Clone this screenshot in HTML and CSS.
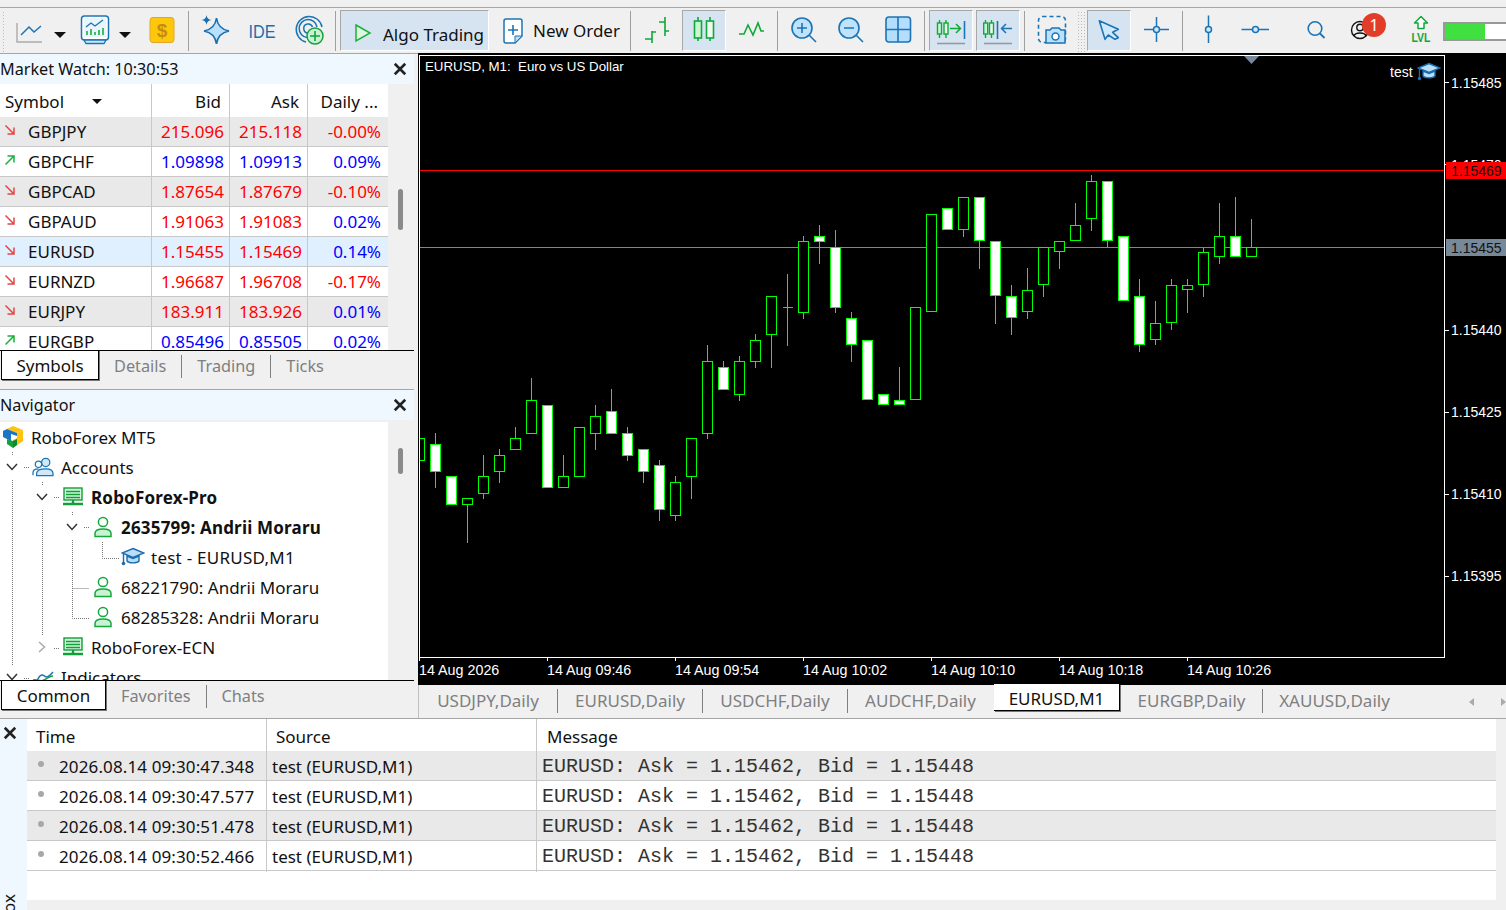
FILE: index.html
```html
<!DOCTYPE html>
<html lang="en">
<head>
    <meta charset="UTF-8">
    <title>MetaTrader 5</title>
    <link rel="stylesheet" href="styles.css">
</head>
<body>
    <svg class="sprites" width="0" height="0">
        <symbol id="down" viewBox="0 0 12 12"><path d="M1.5 1.5 10 10M10 3.5V10H3.5" fill="none" stroke="#e04848" stroke-width="1.5"/></symbol>
        <symbol id="up" viewBox="0 0 12 12"><path d="M1.5 10.5 10 2M3.5 2H10V8.5" fill="none" stroke="#1fae3c" stroke-width="1.5"/></symbol>
        <symbol id="cross" viewBox="0 0 12 12"><path d="M1.5 1.5 10.5 10.5M10.5 1.5 1.5 10.5" fill="none" stroke="#222" stroke-width="2.2"/></symbol>
        <symbol id="server" viewBox="0 0 22 20"><rect x="2" y="1" width="18" height="12" fill="#d3f5dc" stroke="#10a038" stroke-width="1.4"/><path d="M4 4.5h14M4 7.5h14M4 10.5h14" stroke="#10a038" stroke-width="1.4"/><path d="M11 13v3M1 17h20" stroke="#10a038" stroke-width="2.4"/></symbol>
        <symbol id="user" viewBox="0 0 20 22"><circle cx="10" cy="6" r="4.6" fill="#fff" stroke="#15a83c" stroke-width="1.5"/><path d="M2 20.5v-3c0-3 3-4.500 8-4.500s8 1.500 8 4.500v3z" fill="#c9f3d3" stroke="#15a83c" stroke-width="1.5"/></symbol>
        <symbol id="cap" viewBox="0 0 24 20"><path d="M12 1.500 23 6 12 10.500 1 6z" fill="#b8dffa" stroke="#1b6cab" stroke-width="1.4"/><path d="M6 9v5c2 2.500 10 2.500 12 0V9l-6 2.500z" fill="#b8dffa" stroke="#1b6cab" stroke-width="1.4"/><path d="M2.500 7v8" stroke="#1b6cab" stroke-width="1.4"/><circle cx="2.500" cy="16.500" r="1.800" fill="#1b6cab"/></symbol>
    </svg>

    <div class="top-strip"></div>

    <!-- main toolbar -->
    <div class="toolbar">
        <div class="grip"></div>
        <div class="tool w34"><svg class="ico" viewBox="0 0 30 30"><path d="M3 8V27H28" fill="none" stroke="#aaa" stroke-width="1.4"/><path d="M7 20 15 12 20 17 27 11" fill="none" stroke="#1c74b4" stroke-width="1.500"/></svg></div>
        <div class="tool w27"><div class="caret"></div></div>
        <div class="tool w43"><svg class="ico" viewBox="0 0 30 30"><rect x="1.500" y="1" width="27" height="24" rx="3" fill="#fff" stroke="#1c74b4" stroke-width="1.500"/><path d="M4 22 h22 v-19 h-22z" fill="#e9f4fc"/><path d="M6 12 11 8 15 11 23 5" fill="none" stroke="#1c74b4" stroke-width="1.300"/><path d="M7 20v-4M11 20v-6M15 20v-3M19 20v-5M23 20v-7" stroke="#1fae3c" stroke-width="1.600"/><path d="M4 25h22l-2 3.500H6z" fill="#cfe8fa" stroke="#1c74b4" stroke-width="1.300"/></svg></div>
        <div class="tool w19 caret-slot"><div class="caret"></div></div>
        <div class="tool w53"><svg class="ico" viewBox="0 0 30 30"><rect x="3" y="2.500" width="24" height="25" rx="3" fill="#fdc80c" stroke="#e2a52a"/><text class="dollar" x="15" y="22" text-anchor="middle">$</text></svg></div>
        <div class="sep"></div>
        <div class="tool w51"><svg class="ico" viewBox="0 0 30 30"><path d="M16.500 3Q18 14 29 16 18 18 16.500 29 15 18 4 16 15 14 16.500 3Z" fill="#b9e1fd" stroke="#1c6fae" stroke-width="1.600"/><path d="M6.500 0Q7 4.500 11.500 5 7 5.500 6.500 10 6 5.500 1.500 5 6 4.500 6.500 0Z" fill="#1c6fae"/></svg></div>
        <div class="tool w43"><svg class="ico" viewBox="0 0 30 30"><text class="ide" x="1.500" y="23" textLength="27" lengthAdjust="spacingAndGlyphs">IDE</text></svg></div>
        <div class="tool w52"><svg class="ico" viewBox="0 0 30 30"><g fill="none" stroke="#1c74b4" stroke-width="1.500"><path d="M12 27A13 13 0 1 1 28 12"/><path d="M13 22.500A9 9 0 1 1 23 12"/><path d="M14 18A4.500 4.500 0 1 1 18.500 12"/></g><circle cx="21" cy="21" r="8" fill="#c8f2d2" stroke="#15a03c" stroke-width="1.500"/><path d="M21 16v10M16 21h10" stroke="#15a03c" stroke-width="1.600"/></svg></div>
        <div class="sep"></div>
        <div class="tool algo on">
            <svg class="play" viewBox="0 0 18 20"><path d="M2 2 16 10 2 18z" fill="#dcf8e2" stroke="#1fae3c" stroke-width="1.500"/></svg>
            <span>Algo Trading</span>
        </div>
        <div class="tool order">
            <svg class="doc" viewBox="0 0 20 26"><path d="M3 1H17a2 2 0 0 1 2 2V18L12 25H3a2 2 0 0 1-2-2V3a2 2 0 0 1 2-2z" fill="#fff" stroke="#1c74b4" stroke-width="1.500"/><path d="M12 25V18H19z" fill="#b9e1fd" stroke="#1c74b4"/><path d="M10 7V17M5 12H15" stroke="#1c74b4" stroke-width="1.600"/></svg>
            <span>New Order</span>
        </div>
        <div class="sep"></div>
        <div class="tool w51"><svg class="ico" viewBox="0 0 30 30"><path d="M10 16V28M3 24H10M10 17H14M23 2V21M17 7H23M23 16H27" fill="none" stroke="#10a838" stroke-width="1.600"/></svg></div>
        <div class="tool w44 on"><svg class="ico" viewBox="0 0 30 30"><path d="M9 2V26M21 2V26" stroke="#10a838" stroke-width="1.600"/><rect x="5.500" y="6" width="7" height="17" fill="#c9f7d4" stroke="#10a838" stroke-width="1.600"/><rect x="17.500" y="6" width="7" height="17" fill="#eefaf0" stroke="#10a838" stroke-width="1.600"/></svg></div>
        <div class="tool w51"><svg class="ico" viewBox="0 0 30 30"><path d="M2 19H7L11 10 16 20 21 8 24 16H27" fill="none" stroke="#10a838" stroke-width="1.600"/></svg></div>
        <div class="sep"></div>
        <div class="tool w49"><svg class="ico" viewBox="0 0 30 30"><circle cx="14" cy="13" r="10" fill="#bfe3fd" stroke="#1c74b4" stroke-width="1.600"/><path d="M21 20 28 27M14 8V18M9 13H19" stroke="#1c74b4" stroke-width="1.600"/></svg></div>
        <div class="tool w47"><svg class="ico" viewBox="0 0 30 30"><circle cx="13" cy="13" r="10" fill="#bfe3fd" stroke="#1c74b4" stroke-width="1.600"/><path d="M20 20 27 27M8 13H18" stroke="#1c74b4" stroke-width="1.600"/></svg></div>
        <div class="tool w50"><svg class="ico" viewBox="0 0 30 30"><rect x="2" y="2" width="24.500" height="25" rx="3" fill="#b3deff" stroke="#1c74b4" stroke-width="1.600"/><path d="M14 2V27M2 14.500H26" stroke="#1c74b4" stroke-width="1.600"/></svg></div>
        <div class="sep"></div>
        <div class="tool w44 on ml4"><svg class="ico" viewBox="0 0 30 30"><path d="M3.500 5V23M10 5V23" stroke="#10a838" stroke-width="1.400"/><rect x="1.500" y="8" width="4" height="11" fill="#c9f7d4" stroke="#10a838" stroke-width="1.400"/><rect x="8" y="8" width="4" height="11" fill="#eefaf0" stroke="#10a838" stroke-width="1.400"/><path d="M14 13.500H24M20 9 24.500 13.500 20 18" fill="none" stroke="#10a838" stroke-width="1.500"/><path d="M28.500 6V24" stroke="#1c74b4" stroke-width="1.600"/><path d="M1 28.500H29" stroke="#999" stroke-width="1.600"/></svg></div>
        <div class="tool w44 on ml3"><svg class="ico" viewBox="0 0 30 30"><path d="M2.500 5V23M8.500 5V23" stroke="#10a838" stroke-width="1.400"/><rect x="0.700" y="8" width="4" height="11" fill="#c9f7d4" stroke="#10a838" stroke-width="1.400"/><rect x="6.500" y="8" width="4" height="11" fill="#eefaf0" stroke="#10a838" stroke-width="1.400"/><path d="M14.500 6V24" stroke="#1c74b4" stroke-width="1.600"/><path d="M29 13.500H18.500M23 9 18.500 13.500 23 18" fill="none" stroke="#1c74b4" stroke-width="1.500"/><path d="M1 28.500H29" stroke="#999" stroke-width="1.600"/></svg></div>
        <div class="sep ml4"></div>
        <div class="tool w53"><svg class="ico" viewBox="0 0 30 30"><rect x="1.500" y="1.500" width="27" height="26" rx="4" fill="none" stroke="#1c74b4" stroke-width="1.600" stroke-dasharray="4 3"/><path d="M9 15H13L15 13H22L24 15H28V28H9z" fill="#b9e1fd" stroke="#1c74b4" stroke-width="1.500"/><circle cx="18.500" cy="21.500" r="3.500" fill="#fff" stroke="#1c74b4" stroke-width="1.500"/></svg></div>
        <div class="grip grip-mid"></div>
        <div class="tool w44 on"><svg class="ico" viewBox="0 0 30 30"><path d="M5.300 5.700 24.300 14.300 18.700 17.300 24.300 22.700 21 24.300 14.300 20 11 24.300z" fill="#cfe8fa" stroke="#1c74b4" stroke-width="1.600" stroke-linejoin="round"/></svg></div>
        <div class="tool w51"><svg class="ico" viewBox="0 0 30 30"><path d="M2 14.500H11M18 14.500H27M14.500 2V11M14.500 18V27" stroke="#1c74b4" stroke-width="1.500"/><circle cx="14.500" cy="14.500" r="3" fill="#cfe8fa" stroke="#1c74b4" stroke-width="1.500"/></svg></div>
        <div class="sep"></div>
        <div class="tool w52"><svg class="ico" viewBox="0 0 30 30"><path d="M14.500 0.500V28" stroke="#1c74b4" stroke-width="1.500"/><circle cx="14.500" cy="14.500" r="3" fill="#cfe8fa" stroke="#1c74b4" stroke-width="1.500"/></svg></div>
        <div class="tool w42"><svg class="ico" viewBox="0 0 30 30"><path d="M0.500 14.500H28" stroke="#1c74b4" stroke-width="1.500"/><circle cx="14.500" cy="14.500" r="3" fill="#cfe8fa" stroke="#1c74b4" stroke-width="1.500"/></svg></div>
        <div class="tool w46 ml16"><svg class="ico" viewBox="0 0 30 30"><circle cx="14" cy="13.500" r="6.800" fill="none" stroke="#1c74b4" stroke-width="1.600"/><path d="M19 18.500 23.500 23" stroke="#1c74b4" stroke-width="1.800"/></svg></div>
        <div class="tool w44 profile">
            <svg class="ico" viewBox="0 0 30 30"><circle cx="14" cy="15" r="8.500" fill="none" stroke="#111" stroke-width="1.400"/><circle cx="14" cy="12.500" r="3.200" fill="none" stroke="#111" stroke-width="1.400"/><path d="M8 21C9 17 19 17 20 21" fill="none" stroke="#111" stroke-width="1.400"/></svg>
            <span class="badge">1</span>
        </div>
        <div class="tool w45 ml15"><svg class="ico" viewBox="0 0 30 30"><path d="M15 1.500 21.500 8H18V13.500H12V8H8.500z" fill="#fff" stroke="#10a838" stroke-width="1.500" stroke-linejoin="round"/><text class="lvl" x="5.500" y="26.500" textLength="19" lengthAdjust="spacingAndGlyphs">LVL</text></svg></div>
        <div class="meter"><div class="meter-fill"></div></div>
    </div>

    <div class="workspace">
        <!-- left docked panels -->
        <div class="side">
            <div class="panel-head"><span>Market Watch: 10:30:53</span><svg class="close" viewBox="0 0 12 12"><use href="#cross"/></svg></div>
            <div class="mw-body">
                <div class="mw-table">
                    <div class="mw-row mw-head">
                        <div class="mw-sym">Symbol<i class="sort"></i></div>
                        <div class="mw-num">Bid</div>
                        <div class="mw-num">Ask</div>
                        <div class="mw-num">Daily ...</div>
                    </div>
                    <div class="mw-row grey"><div class="mw-sym"><svg class="arr"><use href="#down"/></svg>GBPJPY</div><div class="mw-num red">215.096</div><div class="mw-num red">215.118</div><div class="mw-num red">-0.00%</div></div>
                    <div class="mw-row"><div class="mw-sym"><svg class="arr"><use href="#up"/></svg>GBPCHF</div><div class="mw-num blue">1.09898</div><div class="mw-num blue">1.09913</div><div class="mw-num blue">0.09%</div></div>
                    <div class="mw-row grey"><div class="mw-sym"><svg class="arr"><use href="#down"/></svg>GBPCAD</div><div class="mw-num red">1.87654</div><div class="mw-num red">1.87679</div><div class="mw-num red">-0.10%</div></div>
                    <div class="mw-row"><div class="mw-sym"><svg class="arr"><use href="#down"/></svg>GBPAUD</div><div class="mw-num red">1.91063</div><div class="mw-num red">1.91083</div><div class="mw-num blue">0.02%</div></div>
                    <div class="mw-row sel"><div class="mw-sym"><svg class="arr"><use href="#down"/></svg>EURUSD</div><div class="mw-num red">1.15455</div><div class="mw-num red">1.15469</div><div class="mw-num blue">0.14%</div></div>
                    <div class="mw-row"><div class="mw-sym"><svg class="arr"><use href="#down"/></svg>EURNZD</div><div class="mw-num red">1.96687</div><div class="mw-num red">1.96708</div><div class="mw-num red">-0.17%</div></div>
                    <div class="mw-row grey"><div class="mw-sym"><svg class="arr"><use href="#down"/></svg>EURJPY</div><div class="mw-num red">183.911</div><div class="mw-num red">183.926</div><div class="mw-num blue">0.01%</div></div>
                    <div class="mw-row"><div class="mw-sym"><svg class="arr"><use href="#up"/></svg>EURGBP</div><div class="mw-num blue">0.85496</div><div class="mw-num blue">0.85505</div><div class="mw-num blue">0.02%</div></div>
                </div>
                <div class="scroll"><div class="thumb thumb-mw"></div></div>
            </div>
            <div class="side-tabs tabs-mw">
                <div class="side-tab active w98">Symbols</div>
                <div class="side-tab">Details</div>
                <div class="side-tab">Trading</div>
                <div class="side-tab last">Ticks</div>
            </div>

            <div class="panel-head nav-head"><span>Navigator</span><svg class="close" viewBox="0 0 12 12"><use href="#cross"/></svg></div>
            <div class="nav-body">
                <div class="tree">
                    <svg class="tree-lines" viewBox="0 0 388 258">
                        <path d="M12.500 30V33M12.500 58V243M24 45.500H29M42.500 60V63M42.500 88V213M54 75.500H59M54 226.500H59M72.500 90V93M72.500 118V196.500H89M72.500 166.500H89M84 105.500H89M102.500 120V136.500H120M24 256.500H29"/>
                    </svg>
                    <div class="tree-row root"><svg class="logo" viewBox="0 0 22 24"><path d="M5 4 11 1 21 5 15 8z" fill="#ffc20e"/><path d="M1 6 5 4 15 8V11L9 9V16L1 12z" fill="#1c74c4"/><path d="M15 8 21 5V16L11 23V15L15 13z" fill="#ffc20e"/><path d="M5 14 11 16V23L5 19z" fill="#14a03c"/><path d="M11 16 15 14V20L11 23z" fill="#0d8a30"/></svg>RoboForex MT5</div>
                    <div class="tree-row"><i class="chev"><svg viewBox="0 0 12 8"><path d="M1 1 6 6.500 11 1" fill="none" stroke="#333" stroke-width="1.500"/></svg></i><i class="node"><svg class="i22" viewBox="0 0 24 22"><circle cx="15" cy="6" r="4.500" fill="#cfe8fa" stroke="#1c74b4" stroke-width="1.400"/><circle cx="7" cy="8" r="3.500" fill="#fff" stroke="#1c74b4" stroke-width="1.400"/><path d="M1 20V17C1 14 4 13 7 13" fill="none" stroke="#1c74b4" stroke-width="1.400"/><path d="M5 20.500V18C5 14 10 13 15 13S23 14 23 18V20.500z" fill="#cfe8fa" stroke="#1c74b4" stroke-width="1.400"/></svg></i>Accounts</div>
                    <div class="tree-row l1"><i class="chev"><svg viewBox="0 0 12 8"><path d="M1 1 6 6.500 11 1" fill="none" stroke="#333" stroke-width="1.500"/></svg></i><i class="node"><svg class="i22" viewBox="0 0 22 20"><use href="#server"/></svg></i><b>RoboForex-Pro</b></div>
                    <div class="tree-row l2"><i class="chev"><svg viewBox="0 0 12 8"><path d="M1 1 6 6.500 11 1" fill="none" stroke="#333" stroke-width="1.500"/></svg></i><i class="node"><svg class="i20" viewBox="0 0 20 22"><use href="#user"/></svg></i><b>2635799: Andrii Moraru</b></div>
                    <div class="tree-row l3 wide"><i class="chev"></i><i class="node"><svg class="i24" viewBox="0 0 24 20"><use href="#cap"/></svg></i>test - EURUSD,M1</div>
                    <div class="tree-row l2"><i class="chev"></i><i class="node"><svg class="i20" viewBox="0 0 20 22"><use href="#user"/></svg></i>68221790: Andrii Moraru</div>
                    <div class="tree-row l2"><i class="chev"></i><i class="node"><svg class="i20" viewBox="0 0 20 22"><use href="#user"/></svg></i>68285328: Andrii Moraru</div>
                    <div class="tree-row l1"><i class="chev"><svg viewBox="0 0 8 12" class="chev-r"><path d="M1 1 6.500 6 1 11" fill="none" stroke="#aaa" stroke-width="1.500"/></svg></i><i class="node"><svg class="i22" viewBox="0 0 22 20"><use href="#server"/></svg></i>RoboForex-ECN</div>
                    <div class="tree-row"><i class="chev"><svg viewBox="0 0 12 8"><path d="M1 1 6 6.500 11 1" fill="none" stroke="#333" stroke-width="1.500"/></svg></i><i class="node"><svg class="i22" viewBox="0 0 22 20"><path d="M1 16C6 16 6 8 10 8S13 14 21 5" fill="none" stroke="#1c74b4" stroke-width="1.400"/><path d="M1 13C6 12 8 15 12 13S18 9 21 9" fill="none" stroke="#15a03c" stroke-width="1.400"/></svg></i>Indicators</div>
                </div>
                <div class="scroll"><div class="thumb thumb-nav"></div></div>
            </div>
            <div class="side-tabs tabs-nav">
                <div class="side-tab active w105">Common</div>
                <div class="side-tab">Favorites</div>
                <div class="side-tab last">Chats</div>
            </div>
        </div>

        <div class="chart-col">
            <svg class="chart" id="chart" viewBox="418 53 1088 632" xmlns="http://www.w3.org/2000/svg">
                <defs><clipPath id="plot"><rect x="420" y="56" width="1024" height="601"/></clipPath></defs>
                <rect x="418" y="53" width="1088" height="632" fill="#000"/>
                <path class="hline" d="M420 247.500H1445" stroke="#778899"/>
                <g id="candles" clip-path="url(#plot)"></g>
                <path class="hline" d="M420 170.500H1445" stroke="#ff0000"/>
                <rect class="hline" x="419.500" y="55.500" width="1025" height="602" fill="none" stroke="#fff"/>
                <path class="hline" stroke="#fff" d="M1445 82.500H1449M1445 164.500H1449M1445 330.500H1449M1445 412.500H1449M1445 494.500H1449M1445 576.500H1449M419.500 658V661M547.500 658V661M675.500 658V661M803.500 658V661M931.500 658V661M1059.500 658V661M1187.500 658V661"/>
                <path d="M1244 56H1259L1251.500 64z" fill="#778899"/>
                <text class="ct title" x="425" y="71">EURUSD, M1:&#160; Euro vs US Dollar</text>
                <text class="ct" x="1390" y="77">test</text>
                <svg x="1417" y="62" width="24" height="20" viewBox="0 0 24 20"><use href="#cap"/></svg>
                <text class="ct" x="1451" y="88">1.15485</text>
                <text class="ct" x="1451" y="170">1.15470</text>
                <text class="ct" x="1451" y="335">1.15440</text>
                <text class="ct" x="1451" y="417">1.15425</text>
                <text class="ct" x="1451" y="499">1.15410</text>
                <text class="ct" x="1451" y="581">1.15395</text>
                <rect x="1446" y="162" width="60" height="17" fill="#ff0000"/>
                <text class="ct dark" x="1451" y="176">1.15469</text>
                <rect x="1446" y="239" width="60" height="17" fill="#778899"/>
                <text class="ct dark" x="1451" y="253">1.15455</text>
                <text class="ct time" x="419" y="675">14 Aug 2026</text>
                <text class="ct time" x="547" y="675">14 Aug 09:46</text>
                <text class="ct time" x="675" y="675">14 Aug 09:54</text>
                <text class="ct time" x="803" y="675">14 Aug 10:02</text>
                <text class="ct time" x="931" y="675">14 Aug 10:10</text>
                <text class="ct time" x="1059" y="675">14 Aug 10:18</text>
                <text class="ct time" x="1187" y="675">14 Aug 10:26</text>
            </svg>
            <div class="chart-tabs">
                <div class="ctab sepd">USDJPY,Daily</div>
                <div class="ctab sepd">EURUSD,Daily</div>
                <div class="ctab sepd">USDCHF,Daily</div>
                <div class="ctab">AUDCHF,Daily</div>
                <div class="ctab active">EURUSD,M1</div>
                <div class="ctab sepd">EURGBP,Daily</div>
                <div class="ctab">XAUUSD,Daily</div>
                <div class="ctab-arrows"><i class="tri-l"></i><i class="tri-r"></i></div>
            </div>
        </div>
    </div>

    <!-- toolbox -->
    <div class="toolbox">
        <div class="tb-strip">
            <svg class="close tb-close" viewBox="0 0 12 12"><use href="#cross"/></svg>
            <span class="tb-name">Toolbox</span>
        </div>
        <div class="log">
            <div class="log-row log-head"><div class="c-time">Time</div><div class="c-src">Source</div><div class="c-msg">Message</div></div>
            <div class="log-row grey"><div class="c-time"><i class="dot"></i>2026.08.14 09:30:47.348</div><div class="c-src">test (EURUSD,M1)</div><div class="c-msg mono">EURUSD: Ask = 1.15462, Bid = 1.15448</div></div>
            <div class="log-row"><div class="c-time"><i class="dot"></i>2026.08.14 09:30:47.577</div><div class="c-src">test (EURUSD,M1)</div><div class="c-msg mono">EURUSD: Ask = 1.15462, Bid = 1.15448</div></div>
            <div class="log-row grey"><div class="c-time"><i class="dot"></i>2026.08.14 09:30:51.478</div><div class="c-src">test (EURUSD,M1)</div><div class="c-msg mono">EURUSD: Ask = 1.15462, Bid = 1.15448</div></div>
            <div class="log-row"><div class="c-time"><i class="dot"></i>2026.08.14 09:30:52.466</div><div class="c-src">test (EURUSD,M1)</div><div class="c-msg mono">EURUSD: Ask = 1.15462, Bid = 1.15448</div></div>
        </div>
        <div class="scroll-r"></div>
    </div>

    <script>
        // candles: wick top, wick bottom, body top, body bottom, 1 = bear (white body)
        const candles = [
            [438,461,438,461,0],[433,488,444,472,1],[476,505,476,505,1],[498,543,498,505,0],
            [455,499,476,494,0],[449,483,455,472,0],[427,450,438,450,0],[378,434,400,434,0],
            [405,488,405,488,1],[455,488,476,488,0],[427,477,427,477,0],[405,450,416,434,0],
            [389,434,411,434,1],[427,461,433,456,1],[449,483,449,472,1],[460,521,465,510,1],
            [476,521,482,516,0],[438,499,438,477,0],[345,439,361,434,0],[361,390,367,390,1],
            [356,401,361,395,0],[334,368,340,362,0],[296,368,296,335,0],[274,346,307,308,0],
            [236,319,241,313,0],[225,264,236,242,1],[230,313,247,308,1],[312,362,318,345,1],
            [340,400,340,400,1],[394,405,394,405,1],[367,405,400,405,1],[307,400,307,400,0],
            [214,312,214,312,0],[208,230,208,230,1],[197,237,197,230,0],[197,269,197,241,1],
            [241,324,241,296,1],[285,335,296,318,1],[268,319,290,312,0],[247,297,247,285,0],
            [241,269,241,252,0],[203,241,225,241,0],[175,231,181,219,0],[181,247,181,241,1],
            [236,301,236,301,1],[279,352,296,345,1],[301,345,323,340,0],[279,330,285,323,0],
            [279,313,285,290,0],[248,297,252,285,0],[203,264,236,257,0],[197,257,236,257,1],
            [219,257,247,257,0]
        ];

        const NS = 'http://www.w3.org/2000/svg';
        const group = document.getElementById('candles');

        function addPath(d, fill) {
            const el = document.createElementNS(NS, 'path');
            el.setAttribute('d', d);
            el.setAttribute('fill', fill);
            el.setAttribute('stroke', '#00ff00');
            el.setAttribute('shape-rendering', 'crispEdges');
            group.appendChild(el);
        }

        candles.forEach((c, i) => {
            const cx = 419.5 + 16 * i;
            const h = c[3] - c[2] - 1;
            addPath(`M${cx} ${c[0]}V${c[1]}`, 'none');
            addPath(`M${cx - 5} ${c[2] + 0.5}h10v${h}h-10z`, c[4] ? '#fff' : '#000');
        });
    </script>
</body>
</html>
```

FILE: styles.css
```css
/* === BASE === */
* {
    box-sizing: border-box;
}

html, body {
    margin: 0;
    height: 910px;
    overflow: hidden;
}

body {
    width: 1506px;
    background-color: #f0f0f0;
    font-family: "Noto Sans", "Liberation Sans", sans-serif;
    font-size: 17px;
    color: #111;
}

i {
    font-style: normal;
}

.sprites {
    position: absolute;
}

.top-strip {
    height: 8px;
    border-bottom: 1px solid #a6a6a6;
}

/* === TOOLBAR === */
.toolbar {
    display: flex;
    height: 45px;
    padding-top: 2px;
}

.tool {
    display: flex;
    justify-content: center;
    height: 41px;
    padding-top: 5px;
    position: relative;
    flex-shrink: 0;
}

.tool.on {
    background-color: #d6e4f2;
    border: 1px solid;
    border-color: #a8a8a8 #fff #fff #a8a8a8;
    padding-top: 4px;
}

.ico {
    display: block;
    width: 30px;
    height: 30px;
    overflow: visible;
}

.sep {
    width: 1px;
    height: 40px;
    margin-top: 1px;
    background-color: #a0a0a0;
    flex-shrink: 0;
}

.grip {
    width: 12px;
    margin: 1px 0;
    background-image: radial-gradient(#bbb 1px, transparent 1px);
    background-size: 3px 3px;
    background-repeat: repeat-y;
    background-position: 2px 0;
}

.grip-mid {
    width: 9px;
    background-repeat: repeat;
    background-size: 3px 3px;
}

.w19 { width: 19px; }
.w27 { width: 27px; }
.w34 { width: 34px; }
.w42 { width: 42px; }
.w43 { width: 43px; }
.w44 { width: 44px; }
.w45 { width: 45px; }
.w46 { width: 46px; }
.w47 { width: 47px; }
.w49 { width: 49px; }
.w50 { width: 50px; }
.w51 { width: 51px; }
.w52 { width: 52px; }
.w53 { width: 53px; }
.ml3 { margin-left: 3px; }
.ml4 { margin-left: 4px; }
.ml15 { margin-left: 15px; }
.ml16 { margin-left: 16px; }

.caret {
    width: 0;
    height: 0;
    margin-top: 17px;
    border-left: 6px solid transparent;
    border-right: 6px solid transparent;
    border-top: 6px solid #111;
}

.caret-slot {
    padding-right: 2px;
}

.dollar {
    font: bold 19px "Liberation Sans", sans-serif;
    fill: #c98a10;
}

.ide {
    font: 19px "Liberation Sans", sans-serif;
    fill: #1c6fae;
}

.lvl {
    font: bold 12px "Liberation Sans", sans-serif;
    fill: #10a838;
}

.algo {
    width: 149px;
    margin-left: 4px;
    justify-content: flex-start;
    align-items: center;
    padding: 0 0 0 13px;
    white-space: nowrap;
}

.algo span {
    padding-top: 3px;
}

.play {
    width: 18px;
    height: 20px;
    margin-right: 11px;
}

.order {
    width: 141px;
    justify-content: flex-start;
    align-items: center;
    padding: 0 0 0 14px;
    white-space: nowrap;
}

.doc {
    width: 20px;
    height: 26px;
    margin-right: 10px;
}

.badge {
    position: absolute;
    left: 23px;
    top: 3px;
    width: 24px;
    height: 24px;
    border-radius: 50%;
    background-color: #e23d28;
    color: #fff;
    font-size: 16px;
    line-height: 24px;
    text-align: center;
}

.meter {
    flex: 1;
    height: 19px;
    margin-top: 12px;
    border: 2px solid #999;
    border-right: none;
    background-color: #fff;
}

.meter-fill {
    width: 40px;
    height: 100%;
    background-color: #40e040;
}

/* === WORKSPACE === */
.workspace {
    display: flex;
    height: 666px;
    border-bottom: 1px solid #a6a6a6;
}

.side {
    width: 418px;
    flex-shrink: 0;
    padding-right: 4px;
    border-top: 1px solid #a6a6a6;
}

.panel-head {
    display: flex;
    align-items: center;
    justify-content: space-between;
    height: 30px;
    padding: 0 7px 0 0;
    background-color: #eff7ff;
    font-size: 16.200px;
}

.panel-head span {
    padding-bottom: 1px;
}

.close {
    width: 14px;
    height: 14px;
}

.mw-body {
    display: flex;
    height: 266px;
}

.mw-table {
    width: 388px;
    overflow: hidden;
    background-color: #fff;
}

.mw-row {
    display: grid;
    grid-template-columns: 152px 78px 78px 80px;
    height: 30px;
    border-bottom: 1px solid #c8c8c8;
    line-height: 29px;
    background-color: #fff;
}

.mw-head {
    height: 33px;
    line-height: 36px;
    border-bottom: none;
}

.mw-row > div {
    border-right: 1px solid #c8c8c8;
    white-space: nowrap;
}

.mw-row > div:last-child {
    border-right: none;
    padding-right: 7px;
}

.mw-row.mw-head > div:last-child {
    padding-right: 10px;
}

.mw-sym {
    display: flex;
    position: relative;
    padding-left: 5px;
}

.mw-row:not(.mw-head) .mw-sym {
    padding-left: 4px;
}

.mw-num {
    padding-right: 5px;
    text-align: right;
}

.mw-head .mw-num {
    padding-right: 8px;
}

.grey {
    background-color: #e9e9e9;
}

.sel {
    background-color: #e0f0ff;
}

.red { color: #ff0000; }
.blue { color: #0000ff; }

.arr {
    width: 12px;
    height: 12px;
    margin: 7px 12px 0 0;
}

.sort {
    position: absolute;
    left: 92px;
    top: 15px;
    border-left: 5.500px solid transparent;
    border-right: 5.500px solid transparent;
    border-top: 5.500px solid #111;
}

.scroll {
    flex: 1;
    position: relative;
}

.thumb {
    position: absolute;
    left: 10px;
    width: 5px;
    border-radius: 3px;
    background-color: #8a8a8a;
}

.thumb-mw {
    top: 105px;
    height: 41px;
}

.thumb-nav {
    top: 26px;
    height: 26px;
}

/* === SIDE TABS === */
.side-tabs {
    display: flex;
    border-top: 1px solid #000;
    color: #7f7f7f;
    font-size: 16.300px;
}

.tabs-mw {
    height: 40px;
    border-bottom: 1px solid #a6a6a6;
}

.tabs-nav {
    height: 38px;
}

.side-tab {
    height: 23px;
    margin-top: 4px;
    padding: 0 15px;
    border-right: 1px solid #7f7f7f;
    line-height: 22px;
}

.side-tab.last {
    border-right: none;
}

.side-tab.active {
    height: 30px;
    margin: -1px 0 0 1px;
    padding: 0;
    background-color: #fff;
    border: 1px solid #000;
    box-shadow: 1px 1px 0 #777;
    color: #111;
    font-size: 17px;
    line-height: 29px;
    text-align: center;
}

.w98 { width: 98px; }
.w105 { width: 105px; }

.nav-head {
    margin-bottom: 2px;
}

/* === NAVIGATOR TREE === */
.nav-body {
    display: flex;
    height: 258px;
}

.tree {
    position: relative;
    width: 388px;
    overflow: hidden;
    background-color: #fff;
}

.tree-lines {
    position: absolute;
    left: 0;
    top: 0;
    width: 388px;
    height: 258px;
    fill: none;
    stroke: #777;
    stroke-dasharray: 1 1;
}

.tree-row {
    display: flex;
    align-items: center;
    position: relative;
    height: 30px;
    white-space: nowrap;
}

.tree-row b {
    letter-spacing: 0.190px;
}

.tree-row.wide {
    letter-spacing: 0.250px;
}

.root {
    padding-left: 2px;
}

.logo {
    width: 22px;
    height: 24px;
    margin-right: 7px;
}

.l1 { padding-left: 30px; }
.l2 { padding-left: 60px; }
.l3 { padding-left: 90px; }

.chev {
    display: flex;
    justify-content: center;
    width: 24px;
}

.chev svg {
    width: 12px;
    height: 8px;
}

.chev svg.chev-r {
    width: 8px;
    height: 12px;
}

.node {
    display: flex;
    justify-content: center;
    width: 37px;
}

.i20 { width: 20px; height: 22px; }
.i22 { width: 22px; height: 20px; }
.i24 { width: 24px; height: 20px; }

/* === CHART === */
.chart-col {
    flex: 1;
    display: flex;
    flex-direction: column;
}

.chart {
    display: block;
    width: 1088px;
    height: 632px;
}

.hline {
    shape-rendering: crispEdges;
}

.ct {
    font: 14px "Liberation Sans", sans-serif;
    fill: #fff;
}

.ct.title {
    font-size: 13.300px;
}

.ct.time {
    font-size: 14.300px;
}

.ct.dark {
    fill: #111;
}

.chart-tabs {
    display: grid;
    grid-template-columns: 139px 145px 145px 145px 128px 142px 143px 1fr;
    height: 33px;
    border-left: 1px solid #c0c0c0;
    color: #7f7f7f;
}

.ctab {
    height: 24px;
    margin-top: 4px;
    line-height: 23px;
    text-align: center;
}

.sepd {
    border-right: 1px solid #7f7f7f;
}

.ctab.active {
    height: 27px;
    margin: -1px 0 0 1px;
    width: 126px;
    background-color: #fff;
    border-right: 1px solid #000;
    border-bottom: 1px solid #000;
    box-shadow: 1px 1px 0 #777;
    color: #111;
    line-height: 29px;
}

.ctab-arrows {
    display: flex;
    justify-content: space-between;
    padding: 13px 0 0 63px;
}

.tri-l, .tri-r {
    width: 0;
    height: 0;
    border-top: 4px solid transparent;
    border-bottom: 4px solid transparent;
}

.tri-l { border-right: 5px solid #aaa; }
.tri-r { border-left: 5px solid #aaa; }

/* === TOOLBOX === */
.toolbox {
    display: flex;
    height: 191px;
}

.tb-strip {
    position: relative;
    width: 27px;
    flex-shrink: 0;
    overflow: hidden;
    background-color: #eff7ff;
}

.tb-close {
    position: absolute;
    left: 3px;
    top: 7px;
}

.tb-name {
    position: absolute;
    left: -3px;
    top: 175px;
    writing-mode: vertical-rl;
    transform: rotate(180deg);
    font-size: 17px;
}

.log {
    flex: 1;
    height: 181px;
    background-color: #fff;
}

.log-row {
    display: grid;
    grid-template-columns: 240px 270px 1fr;
    height: 30px;
    border-bottom: 1px solid #c8c8c8;
    line-height: 31px;
    background-color: #fff;
}

.log-row.grey {
    background-color: #e9e9e9;
}

.log-head {
    height: 32px;
    border-bottom: none;
    line-height: 35px;
}

.log-row > div {
    white-space: nowrap;
}

.c-time {
    position: relative;
    padding-left: 32px;
    border-right: 1px solid #c8c8c8;
    letter-spacing: 0.120px;
}

.c-src {
    padding-left: 5px;
    border-right: 1px solid #c8c8c8;
}

.c-msg {
    padding-left: 5px;
}

.log-head .c-time { padding-left: 9px; letter-spacing: 0; }
.log-head .c-src { padding-left: 9px; }
.log-head .c-msg { padding-left: 10px; }

.mono {
    font: 20px/31px "Liberation Mono", monospace;
    color: #333;
}

.dot {
    position: absolute;
    left: 11px;
    top: 10px;
    width: 6px;
    height: 6px;
    border-radius: 50%;
    background-color: #a8a8a8;
}

.scroll-r {
    width: 10px;
    flex-shrink: 0;
}
```
